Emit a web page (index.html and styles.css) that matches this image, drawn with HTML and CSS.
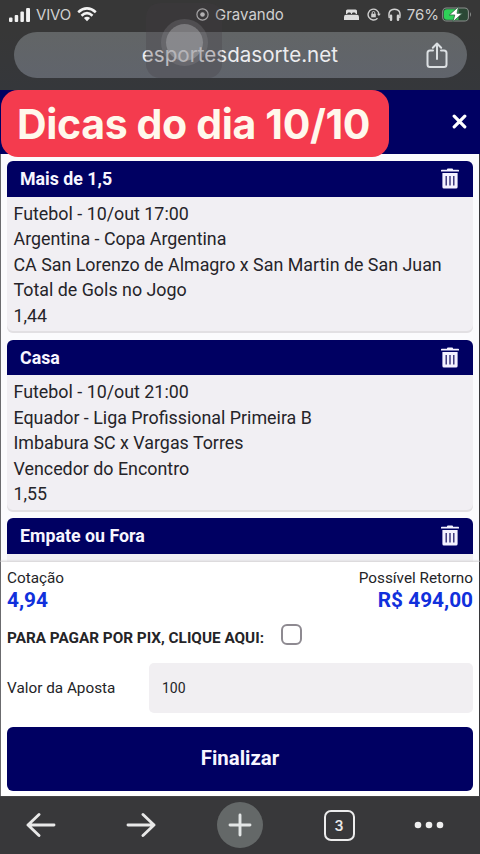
FILE: index.html
```html
<!DOCTYPE html>
<html lang="pt-BR">
<head>
<meta charset="utf-8">
<title>Dicas do dia</title>
<link rel="stylesheet" href="styles.css">
</head>
<body>
<svg class="defs" width="0" height="0">
  <symbol id="trash" viewBox="0 0 18 21">
    <path fill="#f4f2ff" d="M6 1.2Q6 .4 7 .4h4q1 0 1 .8v.6h5.3q.7 0 .7.8v1H0v-1q0-.8.7-.8H6zM1.4 5h15.2v14q0 1.6-1.6 1.6H3Q1.4 20.600 1.400 19z"/>
    <path stroke="#25206a" stroke-width="1.300" d="M5.200 8v9.500M9 8v9.500M12.800 8v9.500"/>
  </symbol>
</svg>
<div class="screen">
  <header class="browser">
    <div class="status">
      <div class="carrier">
        <svg width="22" height="14" viewBox="0 0 22 14" fill="#f2f2f2"><rect x="0" y="9.500" width="3.500" height="4.500" rx="1"/><rect x="5.700" y="7" width="3.500" height="7" rx="1"/><rect x="11.400" y="3.500" width="3.500" height="10.500" rx="1"/><rect x="17.100" y="0" width="3.900" height="14" rx="1"/></svg>
        <span class="vivo">VIVO</span>
        <svg width="20" height="15" viewBox="0 0 20 15" fill="none" stroke="#f2f2f2" stroke-width="2.600"><path d="M1.200 5.200Q10-2.400 18.800 5.200M4.500 8.700Q10 3.700 15.500 8.700"/><path d="M6.900 11Q10 8.400 13.100 11L10 14.200z" fill="#f2f2f2" stroke="none"/></svg>
      </div>
      <div class="recording">
        <svg width="13" height="13" viewBox="0 0 13 13"><circle cx="6.500" cy="6.500" r="5.600" fill="none" stroke="#ccc" stroke-width="1.200"/><circle cx="6.500" cy="6.500" r="2.300" fill="#ddd"/></svg>
        <span>Gravando</span>
      </div>
      <div class="indicators">
        <svg class="bed" width="15" height="12" viewBox="0 0 15 12" fill="#dedede"><path d="M2 5V2Q2 .5 3.500.500h8Q13 .5 13 2v3h-1.200q0-1.500-1.300-1.500H9Q7.900 3.500 7.900 5h-.8Q7.100 3.500 6 3.500H4.500Q3.200 3.500 3.200 5zM0 8q0-2.200 2-2.200h11Q15 5.800 15 8v3H0z"/></svg>
        <svg class="lock" width="14" height="13" viewBox="0 0 14 13" fill="none" stroke="#cfcfcf" stroke-width="1.400"><path d="M10.500 10.200A5.400 5.400 0 1 1 11.900 6.500"/><path d="M10 5.700h3.800L11.900 8z" fill="#cfcfcf" stroke="none"/><rect x="4.200" y="5.800" width="4.600" height="3.500" fill="#cfcfcf" stroke="none"/><path d="M5.200 6V4.800q0-1.300 1.300-1.300t1.300 1.300V6" stroke-width="1"/></svg>
        <svg class="phones" width="13" height="13" viewBox="0 0 13 13" fill="none" stroke="#d2d2d2"><path d="M1.300 10Q-.4 1.200 6.500 1.200T11.700 10" stroke-width="1.500"/><path d="M3 7.700v4M10 7.700v4" stroke-width="2.500" stroke-linecap="round"/></svg>
        <span class="percent">76%</span>
        <svg class="battery" width="30" height="17" viewBox="0 0 31 17"><rect x=".7" y="1.700" width="26.600" height="13.600" rx="4" fill="#2b4835" stroke="#8b8f8d" stroke-width="1.100"/><path d="M5 3.200h12v10.600H5q-3 0-3-3V6.200q0-3 3-3z" fill="#2ed158"/><path d="M29 6v5q2-2.500 0-5" fill="#8b8f8d"/><path d="M17 .5 7.500 9h5.700l-1.900 7L21 7.300h-5.500z" fill="#fff" stroke="#2c5940" stroke-width=".8"/></svg>
      </div>
    </div>
    <div class="address">
      <span class="url">esportesdasorte.net</span>
      <svg class="share" width="22" height="27" viewBox="0 0 22 27" fill="none" stroke="#dce0e3" stroke-width="2" stroke-linecap="round" stroke-linejoin="round"><path d="M7 8.500H4Q1.500 8.500 1.500 11v11.500Q1.500 25 4 25h14q2.500 0 2.500-2.500V11q0-2.500-2.500-2.500h-3M11 17V1.500M6.800 5.700 11 1.500l4.200 4.200"/></svg>
    </div>
    <div class="touch"><i></i></div>
  </header>
  <div class="titlebar">
    <h1 class="tag">Dicas do dia 10/10</h1>
    <svg class="close" width="15" height="15" viewBox="0 0 15 15"><path d="M2.200 2.200l10.600 10.600M12.800 2.200l-10.600 10.600" stroke="#fff" stroke-width="3.200" stroke-linecap="round"/></svg>
  </div>
  <main class="bets">
    <article class="bet">
      <h2><span>Mais de 1,5</span><svg width="18" height="21"><use href="#trash"/></svg></h2>
      <div class="details">
        <p>Futebol - 10/out 17:00</p><p>Argentina - Copa Argentina</p><p>CA San Lorenzo de Almagro x San Martin de San Juan</p><p>Total de Gols no Jogo</p><p>1,44</p>
      </div>
    </article>
    <article class="bet">
      <h2><span>Casa</span><svg width="18" height="21"><use href="#trash"/></svg></h2>
      <div class="details">
        <p>Futebol - 10/out 21:00</p><p>Equador - Liga Profissional Primeira B</p><p>Imbabura SC x Vargas Torres</p><p>Vencedor do Encontro</p><p>1,55</p>
      </div>
    </article>
    <article class="bet">
      <h2><span>Empate ou Fora</span><svg width="18" height="21"><use href="#trash"/></svg></h2>
      <div class="details"></div>
    </article>
  </main>
  <section class="summary">
    <div class="totals">
      <div><div class="label">Cotação</div><div class="amount">4,94</div></div>
      <div class="return"><div class="label">Possível Retorno</div><div class="amount">R$ 494,00</div></div>
    </div>
    <div class="pix"><span>PARA PAGAR POR PIX, CLIQUE AQUI:</span><i class="check"></i></div>
    <div class="stake"><span class="stake-label">Valor da Aposta</span><div class="field">100</div></div>
    <div class="submit">Finalizar</div>
  </section>
  <nav class="toolbar">
    <svg width="30" height="26" viewBox="0 0 30 26" fill="none" stroke="#e8e8e8" stroke-width="2.900" stroke-linecap="round" stroke-linejoin="round"><path d="M28 13H2M13 2.500 2 13l11 10.500"/></svg>
    <svg width="30" height="26" viewBox="0 0 30 26" fill="none" stroke="#e8e8e8" stroke-width="2.900" stroke-linecap="round" stroke-linejoin="round"><path d="M2 13h26M17 2.500 28 13 17 23.500"/></svg>
    <div class="plus"><svg width="24" height="24" viewBox="0 0 24 24" stroke="#e3e6e6" stroke-width="2.900" stroke-linecap="round"><path d="M12 2v20M2 12h20"/></svg></div>
    <div class="tabs">3</div>
    <svg width="30" height="8" viewBox="0 0 30 8" fill="#efefef"><circle cx="4" cy="4" r="3.300"/><circle cx="15" cy="4" r="3.300"/><circle cx="26" cy="4" r="3.300"/></svg>
  </nav>
</div>
</body>
</html>
```
FILE: styles.css
```css
* { box-sizing: border-box; }
body, h1, h2, p { margin: 0; }
body { background: #37373a; font-family: Roboto, sans-serif; }
svg { display: block; flex: none; }
.defs { position: absolute; }
.screen { width: 480px; height: 854px; display: flex; flex-direction: column; overflow: hidden; }
.browser { position: relative; height: 90px; padding: 0 13px 0 14px; background: linear-gradient(#373737 0 35%, #35373b); font-family: Inter, sans-serif; }
.status { display: grid; grid-template-columns: 183px 1fr auto; height: 32px; margin-left: -5px; margin-right: -5px; color: #d0d0d0; font-size: 15px; }
.carrier, .recording, .indicators { display: flex; align-items: center; height: 29px; }
.vivo { margin: 0 6px 0 5px; letter-spacing: -.15px; }
.recording { gap: 6px; padding-left: 4px; }
.bed { margin-right: 8px; }
.lock { margin-right: 7px; }
.phones { margin-right: 6px; }
.percent { margin-right: 3px; }
.address { height: 46px; border-radius: 23px; background: linear-gradient(#626566, #60646c); display: flex; align-items: center; justify-content: flex-end; padding-right: 19px; }
.url { color: #ececef; font-size: 20.600px; margin: -2px 88px 0 0; white-space: nowrap; }
.touch { position: absolute; left: 146px; top: 3px; width: 76px; height: 75px; border-radius: 14px; background: rgba(65, 60, 68, .27); }
.touch i { position: absolute; left: 20px; top: 21px; width: 37px; height: 37px; border-radius: 50%; background: rgba(175, 175, 178, .55); box-shadow: 0 0 0 5px rgba(150, 150, 155, .24); }
.titlebar { height: 64px; display: flex; align-items: flex-start; justify-content: space-between; background: #000062; position: relative; z-index: 1; }
.tag { width: 388px; height: 67px; margin-left: 1px; border-radius: 17px; background: #f43b4e; color: #fff8ec; font: 700 41px/69px Inter, sans-serif; letter-spacing: -.35px; padding-left: 16px; white-space: nowrap; }
.close { margin: 24px 13px 0 0; }
.bets { height: 408px; overflow: hidden; padding: 7px 6px 0 6px; background: #fbfbfd; border: solid #6b6b6e; border-width: 0 1px; border-right-color: #37373a; }
.bet { margin-bottom: 6.500px; }
.bet h2 { height: 35.500px; display: flex; align-items: center; justify-content: space-between; padding: 0 14px 0 13px; background: #000062; color: #f7f5ff; border-radius: 6px 6px 0 0; font-size: 17.800px; font-weight: 700; }
.details { height: 136.500px; padding: 4px 6.500px 0; background: #f1eff3; border-radius: 0 0 6px 6px; box-shadow: inset 0 -2px #e2e0e3; font-size: 17.850px; line-height: 25.500px; color: #252429; white-space: nowrap; }
.summary { height: 234px; background: #fff; border: solid #6b6b6e; border-width: 0 1px; border-right-color: #37373a; box-shadow: 0 -1px 2px #d4d2d4; padding: 6px 6px 0; color: #242427; position: relative; }
.totals { display: flex; justify-content: space-between; }
.label { font-size: 15.300px; line-height: 21px; }
.return { text-align: right; }
.amount { color: #1130dc; font-weight: 700; font-size: 20.800px; line-height: 23px; }
.pix { display: flex; align-items: center; height: 33px; margin-top: 9px; font-size: 15.300px; font-weight: 700; }
.check { width: 21px; height: 21px; margin: -6px 0 0 17px; border: 2px solid #8e8a91; border-radius: 6px; }
.stake { display: flex; align-items: center; height: 50px; margin-top: 9px; }
.stake-label { width: 142px; font-size: 15.300px; }
.field { flex: 1; height: 50px; border-radius: 5px; background: #f1eff2; padding-left: 13px; font-size: 14px; line-height: 50px; }
.submit { height: 64px; margin-top: 13.500px; background: #000062; color: #f7f5ff; border-radius: 6px; font-size: 20.400px; line-height: 63px; font-weight: 700; text-align: center; }
.toolbar { height: 58px; flex: none; background: #38383a; display: grid; grid-template-columns: 82px 118px 80px 118px 62px; align-items: center; justify-items: center; }
.plus { width: 46px; height: 46px; border-radius: 50%; background: #646868; display: grid; place-items: center; }
.tabs { width: 31px; height: 31px; border: 2.500px solid #ececec; border-radius: 7px; color: #e8e8e8; font: 600 14px/27px Inter, sans-serif; text-align: center; }
```
